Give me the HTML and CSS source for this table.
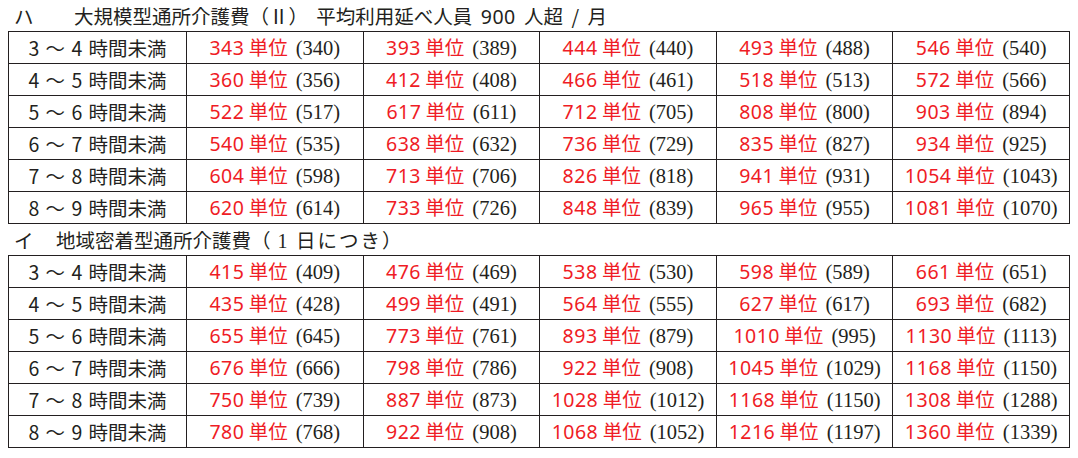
FILE: index.html
```html
<!DOCTYPE html>
<html lang="ja">
<head>
<meta charset="utf-8">
<link rel="stylesheet" href="styles.css">
</head>
<body>
<div class="page">
  <div class="heading"><span class="kana-ha">ハ</span><span class="title">大規模型通所介護費（Ⅱ） 平均利用延べ人員 <span class="n">900</span> 人超 / 月</span></div>
  <table class="fee">
    <colgroup><col class="c1"><col class="c"><col class="c"><col class="c"><col class="c"><col class="c"></colgroup>
    <tbody>
      <tr><td class="t">3 ～ 4 時間未満</td><td><span class="u"><span class="n">343</span> 単位</span><span class="p">(340)</span></td><td><span class="u"><span class="n">393</span> 単位</span><span class="p">(389)</span></td><td><span class="u"><span class="n">444</span> 単位</span><span class="p">(440)</span></td><td><span class="u"><span class="n">493</span> 単位</span><span class="p">(488)</span></td><td><span class="u"><span class="n">546</span> 単位</span><span class="p">(540)</span></td></tr>
      <tr><td class="t">4 ～ 5 時間未満</td><td><span class="u"><span class="n">360</span> 単位</span><span class="p">(356)</span></td><td><span class="u"><span class="n">412</span> 単位</span><span class="p">(408)</span></td><td><span class="u"><span class="n">466</span> 単位</span><span class="p">(461)</span></td><td><span class="u"><span class="n">518</span> 単位</span><span class="p">(513)</span></td><td><span class="u"><span class="n">572</span> 単位</span><span class="p">(566)</span></td></tr>
      <tr><td class="t">5 ～ 6 時間未満</td><td><span class="u"><span class="n">522</span> 単位</span><span class="p">(517)</span></td><td><span class="u"><span class="n">617</span> 単位</span><span class="p">(611)</span></td><td><span class="u"><span class="n">712</span> 単位</span><span class="p">(705)</span></td><td><span class="u"><span class="n">808</span> 単位</span><span class="p">(800)</span></td><td><span class="u"><span class="n">903</span> 単位</span><span class="p">(894)</span></td></tr>
      <tr><td class="t">6 ～ 7 時間未満</td><td><span class="u"><span class="n">540</span> 単位</span><span class="p">(535)</span></td><td><span class="u"><span class="n">638</span> 単位</span><span class="p">(632)</span></td><td><span class="u"><span class="n">736</span> 単位</span><span class="p">(729)</span></td><td><span class="u"><span class="n">835</span> 単位</span><span class="p">(827)</span></td><td><span class="u"><span class="n">934</span> 単位</span><span class="p">(925)</span></td></tr>
      <tr><td class="t">7 ～ 8 時間未満</td><td><span class="u"><span class="n">604</span> 単位</span><span class="p">(598)</span></td><td><span class="u"><span class="n">713</span> 単位</span><span class="p">(706)</span></td><td><span class="u"><span class="n">826</span> 単位</span><span class="p">(818)</span></td><td><span class="u"><span class="n">941</span> 単位</span><span class="p">(931)</span></td><td><span class="u"><span class="n">1054</span> 単位</span><span class="p">(1043)</span></td></tr>
      <tr><td class="t">8 ～ 9 時間未満</td><td><span class="u"><span class="n">620</span> 単位</span><span class="p">(614)</span></td><td><span class="u"><span class="n">733</span> 単位</span><span class="p">(726)</span></td><td><span class="u"><span class="n">848</span> 単位</span><span class="p">(839)</span></td><td><span class="u"><span class="n">965</span> 単位</span><span class="p">(955)</span></td><td><span class="u"><span class="n">1081</span> 単位</span><span class="p">(1070)</span></td></tr>
    </tbody>
  </table>
  <div class="heading"><span class="kana-i">イ</span><span class="title">地域密着型通所介護費（<span class="pn">1</span> <span class="wide">日につき）</span></span></div>
  <table class="fee">
    <colgroup><col class="c1"><col class="c"><col class="c"><col class="c"><col class="c"><col class="c"></colgroup>
    <tbody>
      <tr><td class="t">3 ～ 4 時間未満</td><td><span class="u"><span class="n">415</span> 単位</span><span class="p">(409)</span></td><td><span class="u"><span class="n">476</span> 単位</span><span class="p">(469)</span></td><td><span class="u"><span class="n">538</span> 単位</span><span class="p">(530)</span></td><td><span class="u"><span class="n">598</span> 単位</span><span class="p">(589)</span></td><td><span class="u"><span class="n">661</span> 単位</span><span class="p">(651)</span></td></tr>
      <tr><td class="t">4 ～ 5 時間未満</td><td><span class="u"><span class="n">435</span> 単位</span><span class="p">(428)</span></td><td><span class="u"><span class="n">499</span> 単位</span><span class="p">(491)</span></td><td><span class="u"><span class="n">564</span> 単位</span><span class="p">(555)</span></td><td><span class="u"><span class="n">627</span> 単位</span><span class="p">(617)</span></td><td><span class="u"><span class="n">693</span> 単位</span><span class="p">(682)</span></td></tr>
      <tr><td class="t">5 ～ 6 時間未満</td><td><span class="u"><span class="n">655</span> 単位</span><span class="p">(645)</span></td><td><span class="u"><span class="n">773</span> 単位</span><span class="p">(761)</span></td><td><span class="u"><span class="n">893</span> 単位</span><span class="p">(879)</span></td><td><span class="u"><span class="n">1010</span> 単位</span><span class="p">(995)</span></td><td><span class="u"><span class="n">1130</span> 単位</span><span class="p">(1113)</span></td></tr>
      <tr><td class="t">6 ～ 7 時間未満</td><td><span class="u"><span class="n">676</span> 単位</span><span class="p">(666)</span></td><td><span class="u"><span class="n">798</span> 単位</span><span class="p">(786)</span></td><td><span class="u"><span class="n">922</span> 単位</span><span class="p">(908)</span></td><td><span class="u"><span class="n">1045</span> 単位</span><span class="p">(1029)</span></td><td><span class="u"><span class="n">1168</span> 単位</span><span class="p">(1150)</span></td></tr>
      <tr><td class="t">7 ～ 8 時間未満</td><td><span class="u"><span class="n">750</span> 単位</span><span class="p">(739)</span></td><td><span class="u"><span class="n">887</span> 単位</span><span class="p">(873)</span></td><td><span class="u"><span class="n">1028</span> 単位</span><span class="p">(1012)</span></td><td><span class="u"><span class="n">1168</span> 単位</span><span class="p">(1150)</span></td><td><span class="u"><span class="n">1308</span> 単位</span><span class="p">(1288)</span></td></tr>
      <tr><td class="t">8 ～ 9 時間未満</td><td><span class="u"><span class="n">780</span> 単位</span><span class="p">(768)</span></td><td><span class="u"><span class="n">922</span> 単位</span><span class="p">(908)</span></td><td><span class="u"><span class="n">1068</span> 単位</span><span class="p">(1052)</span></td><td><span class="u"><span class="n">1216</span> 単位</span><span class="p">(1197)</span></td><td><span class="u"><span class="n">1360</span> 単位</span><span class="p">(1339)</span></td></tr>
    </tbody>
  </table>
</div>
</body>
</html>
```
FILE: styles.css
```css
html, body {
  margin: 0;
  padding: 0;
  background: #ffffff;
}
body {
  font-family: "Noto Sans CJK JP", "Noto Sans", sans-serif;
  font-size: 19.5px;
  color: #231f20;
}
.page {
  padding-left: 8px;
  width: 1061px;
}
.heading {
  height: 31px;
  line-height: 31px;
  display: flex;
  white-space: nowrap;
  word-spacing: 4px;
}
.kana-ha,
.kana-i {
  flex: none;
  margin-left: 6px;
}
.kana-ha { width: 60px; }
.kana-i { width: 42px; }
.title {
  flex: none;
}
.n {
  font-family: "Noto Sans", sans-serif;
  letter-spacing: 0.5px;
}
.pn {
  font-family: "Liberation Serif", serif;
  font-size: 20px;
  margin-left: 7px;
}
.wide {
  letter-spacing: 2px;
}
.fee {
  border-collapse: collapse;
  table-layout: fixed;
  width: 1061px;
}
.c1 { width: 178px; }
.c { width: 176.6px; }
.fee td {
  border: 1.5px solid #231f20;
  height: 31px;
  padding: 0;
  text-align: center;
  vertical-align: middle;
  line-height: 30px;
  white-space: nowrap;
}
.fee td.t {
  word-spacing: 2px;
}
.u {
  color: #ef1c25;
}
.p {
  font-family: "Liberation Serif", serif;
  font-size: 20.5px;
  margin-left: 8px;
}
```
